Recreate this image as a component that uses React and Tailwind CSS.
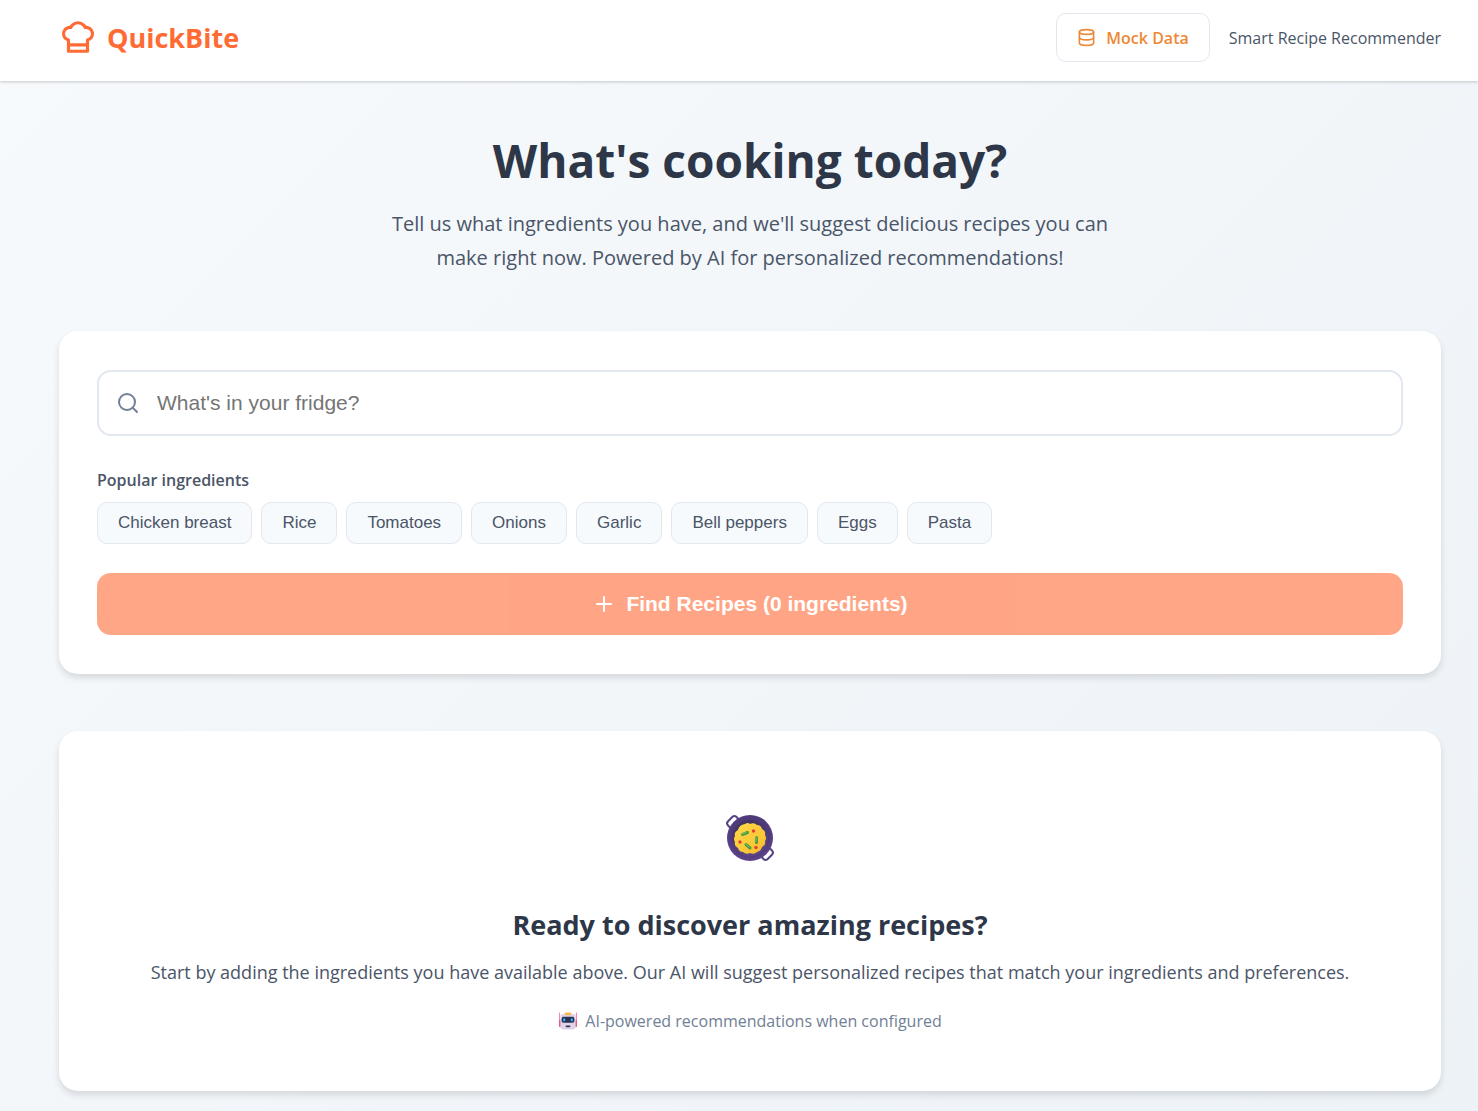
import { useState } from 'react';
import { Database, Plus, Search } from 'lucide-react';

const popularIngredients = [
  'Chicken breast',
  'Rice',
  'Tomatoes',
  'Onions',
  'Garlic',
  'Bell peppers',
  'Eggs',
  'Pasta',
];

const ChefHatIcon = ({ className }) => (
  <svg
    viewBox="0 0 24 24"
    fill="none"
    stroke="currentColor"
    strokeWidth="2"
    strokeLinecap="round"
    strokeLinejoin="round"
    className={className}
    aria-hidden="true"
  >
    <path d="M6 13.87A4 4 0 0 1 7.41 6a5.11 5.11 0 0 1 1.05-1.54 5 5 0 0 1 7.08 0A5.11 5.11 0 0 1 16.59 6 4 4 0 0 1 18 13.87V21H6Z" />
    <line x1="6" x2="18" y1="17" y2="17" />
  </svg>
);

const PanIcon = ({ className }) => (
  <svg viewBox="0 0 58 58" className={className} aria-hidden="true">
    <defs>
      <radialGradient id="pan-rim" cx="50%" cy="45%" r="58%">
        <stop offset="0.7" stopColor="#4e3a78" />
        <stop offset="1" stopColor="#624792" />
      </radialGradient>
      <linearGradient id="pan-inside" x1="0" y1="0" x2="0.4" y2="1">
        <stop offset="0" stopColor="#3b3058" />
        <stop offset="1" stopColor="#5b4588" />
      </linearGradient>
      <linearGradient id="pan-food" x1="0" y1="0" x2="1" y2="1">
        <stop offset="0" stopColor="#ffd84a" />
        <stop offset="1" stopColor="#f8bd2c" />
      </linearGradient>
    </defs>
    <g fill="none" stroke="#5a4382" strokeWidth="2">
      <rect x="6" y="9" width="12" height="8" rx="3" transform="rotate(-45 12 13)" />
      <rect x="40" y="41" width="12" height="8" rx="3" transform="rotate(-45 46 45)" />
    </g>
    <circle cx="29" cy="29" r="23" fill="url(#pan-rim)" />
    <circle cx="29" cy="29" r="18" fill="url(#pan-inside)" />
    <path
      fill="url(#pan-food)"
      d="M24 15q3-2 5 0q4-2 7 1q4 0 5 4q4 2 3 6q2 3 0 6q1 4-3 6q-1 4-5 5q-3 3-7 1q-4 2-7-1q-4 0-5-4q-4-2-3-6q-2-3 0-6q-1-4 3-6q1-5 7-6z"
    />
    <g strokeWidth="3" strokeLinecap="round" stroke="#4a9c40">
      <path d="M21.500 25.500l5-2" />
      <path d="M35.500 28.500v5" />
      <path d="M25 35.500l4 3.500" />
    </g>
    <g strokeWidth="1" strokeLinecap="round" stroke="#80c65b">
      <path d="M21 25l4-1.500" />
      <path d="M35 28v4" />
      <path d="M25 35l3 3" />
    </g>
    <g fill="#e63e35">
      <circle cx="32.500" cy="22" r="1.700" />
      <circle cx="19" cy="33" r="1.700" />
      <circle cx="35" cy="38.500" r="1.700" />
    </g>
  </svg>
);

const RobotIcon = ({ className }) => (
  <svg viewBox="0 0 20 20" className={className} aria-hidden="true">
    <path d="M1.600 2v13M18.400 2v13" stroke="#f27c9b" strokeWidth="1" strokeLinecap="round" />
    <rect x="1" y="9" width="2" height="7" rx="1" fill="#ea5580" />
    <rect x="17" y="9" width="2" height="7" rx="1" fill="#ea5580" />
    <rect x="2.400" y="3" width="15.200" height="15.400" rx="3" fill="#dfd3e8" />
    <rect x="6.800" y="1.600" width="6.400" height="2.600" rx="1" fill="#f9b84c" />
    <rect x="3.600" y="5.800" width="12.800" height="6" rx="2" fill="#2c3052" />
    <rect x="5.200" y="7.200" width="2" height="3.200" rx="1" fill="#24b5ef" />
    <rect x="12.800" y="7.200" width="2" height="3.200" rx="1" fill="#24b5ef" />
    <rect x="7.600" y="14.400" width="4.800" height="1.900" rx="0.800" fill="#3b3452" />
  </svg>
);

const Header = () => (
  <header className="relative bg-white shadow-[0_1px_3px_rgba(0,0,0,0.2)]">
    <div className="flex items-center justify-between pt-[13px] pb-[19px] pl-[59px] pr-[37px]">
      <a href="#" className="flex items-start gap-[10px] text-[#ff6b35]">
        <ChefHatIcon className="size-[38px]" />
        <span className="text-[27px] leading-10 font-bold">QuickBite</span>
      </a>
      <div className="flex items-center gap-[19px]">
        <button
          type="button"
          className="flex h-[49px] items-center gap-[10px] rounded-[10px] border border-[#e2e8f0] px-5 text-base font-semibold text-[#ed8936]"
        >
          <Database className="size-[19px]" />
          Mock Data
        </button>
        <span className="text-base text-[#4a5568]">Smart Recipe Recommender</span>
      </div>
    </div>
  </header>
);

const App = () => {
  const [query, setQuery] = useState('');
  const [selected, setSelected] = useState([]);

  const addIngredient = (name) => {
    if (!selected.includes(name)) {
      setSelected([...selected, name]);
    }
  };

  return (
    <div className="min-h-screen bg-linear-135 from-[#f7fafc] to-[#edf2f7] font-['Open_Sans','Noto_Sans',sans-serif] text-[#2d3748]">
      <Header />

      <main className="pt-[47px] pb-5 pl-[59px] pr-[37px]">
        {/* Hero */}
        <section className="mx-auto mb-14 max-w-[740px] text-center">
          <h1 className="mb-[15px] text-[46px] leading-16 font-bold">What's cooking today?</h1>
          <p className="text-[20px] leading-[34px] text-[#4a5568]">
            Tell us what ingredients you have, and we'll suggest delicious recipes you can make
            right now. Powered by AI for personalized recommendations!
          </p>
        </section>

        {/* Ingredient input */}
        <section className="mb-[57px] rounded-[19px] bg-white px-[38px] py-[39px] shadow-[0_4px_7px_rgba(0,0,0,0.12)]">
          <label className="mb-[30px] flex h-[66px] items-center gap-[17px] rounded-[14px] border-2 border-[#e2e8f0] px-[17px]">
            <Search className="size-6 shrink-0 text-[#718096]" />
            <input
              type="text"
              value={query}
              onChange={(e) => setQuery(e.target.value)}
              placeholder="What's in your fridge?"
              aria-label="What's in your fridge?"
              className="min-w-0 flex-1 bg-transparent font-['Liberation_Sans',sans-serif] text-[21px] outline-none placeholder:text-[#757575]"
            />
          </label>

          <h2 className="mb-2 text-base leading-7 font-semibold text-[#4a5568]">
            Popular ingredients
          </h2>
          <div className="mb-[29px] flex flex-wrap gap-[9px]">
            {popularIngredients.map((name) => (
              <button
                key={name}
                type="button"
                onClick={() => addIngredient(name)}
                className="h-[42px] rounded-[10px] border border-[#e2e8f0] bg-[#f7fafc] px-5 font-['Liberation_Sans',sans-serif] text-[17px] text-[#4a5568]"
              >
                {name}
              </button>
            ))}
          </div>

          <button
            type="button"
            disabled={selected.length === 0}
            className="flex h-[62px] w-full items-center justify-center gap-[10px] rounded-[14px] bg-[#ff6b35] font-['Liberation_Sans',sans-serif] text-[21px] font-bold text-white disabled:opacity-60"
          >
            <Plus className="size-6" />
            Find Recipes ({selected.length} ingredients)
          </button>
        </section>

        {/* Empty state */}
        <section className="flex flex-col items-center rounded-[19px] bg-white px-[38px] pt-[78px] pb-[54px] text-center shadow-[0_4px_7px_rgba(0,0,0,0.12)]">
          <PanIcon className="mb-9 size-[58px]" />
          <h2 className="mb-[9px] text-[27px] leading-11 font-bold">Ready to discover amazing recipes?</h2>
          <p className="mb-[17px] text-[18px] leading-8 text-[#4a5568]">
            Start by adding the ingredients you have available above. Our AI will suggest
            personalized recipes that match your ingredients and preferences.
          </p>
          <p className="flex items-center gap-[7px] text-base leading-8 text-[#718096]">
            <RobotIcon className="size-5" />
            AI-powered recommendations when configured
          </p>
        </section>
      </main>
    </div>
  );
};

export default App;
